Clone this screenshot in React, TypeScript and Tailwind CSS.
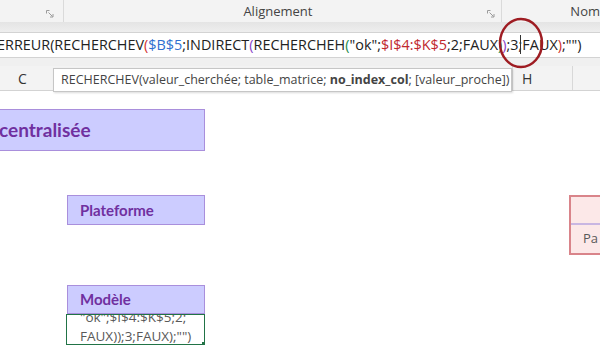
import React from 'react';

function Launcher() {
  return (
    <svg width="8" height="8" viewBox="0 0 8 8" className="shrink-0">
      <path d="M0.5 0.5h3M0.5 0.5v3" stroke="#9a9a9a" strokeWidth="1" fill="none" />
      <path d="M2.5 2.5l4 4M7 4v3h-3" stroke="#9a9a9a" strokeWidth="1" fill="none" />
    </svg>
  );
}

export default function App() {
  return (
    <div
      className="relative w-[600px] h-[363px] overflow-hidden bg-white"
      style={{ fontFamily: '"Open Sans", "Noto Sans", sans-serif' }}
    >
      {/* ─── Ribbon group labels ─── */}
      <div className="flex h-[22px] bg-[#f3f3f3] text-[13px] text-[#444]">
        <div className="w-[65px] flex items-center justify-end pr-[9px] pt-[6px] border-r border-[#dadada]">
          <Launcher />
        </div>
        <div className="w-[442px] flex items-center border-r border-[#dadada] relative">
          <span className="flex-1 text-center pl-[4px] leading-none">Alignement</span>
          <div className="pr-[6px] pt-[6px]">
            <Launcher />
          </div>
        </div>
        <div className="flex items-center pl-[68px] leading-none">Nom</div>
      </div>
      <div className="h-[10px] bg-gradient-to-b from-[#e4e4e4] to-[#eeeeee]" />

      {/* ─── Formula bar ─── */}
      <div className="h-[26px] bg-white border-y border-[#d3d3d3] flex items-center">
        <div className="relative whitespace-nowrap text-[14.4px] text-[#222] ml-[-3px] leading-none">
          <span>ERREUR(RECHERCHEV</span>
          <span className="text-[#d0312d]">(</span>
          <span className="text-[#2f6fcf]">$B$5</span>
          <span>;INDIRECT</span>
          <span className="text-[#8a3fc8]">(</span>
          <span>RECHERCHEH</span>
          <span className="text-[#1e8a4a]">(</span>
          <span>"ok";</span>
          <span className="text-[#c0272d]">$I$4:$K$5</span>
          <span>;2;FAUX</span>
          <span className="text-[#1e8a4a]">)</span>
          <span className="text-[#8a3fc8]">)</span>
          <span>;3</span>
          <span className="relative inline-block w-0 h-[1px]">
            <span className="absolute left-[1px] top-[-14px] w-[1px] h-[19px] bg-[#333]" />
            {/* ─── annotation ellipse around the cursor ─── */}
            <svg
              className="absolute left-[-22px] top-[-32px]"
              width="48"
              height="52"
              viewBox="0 0 48 52"
            >
              <ellipse cx="24" cy="26" rx="21" ry="24" fill="none" stroke="#9e1c22" strokeWidth="2.5" />
            </svg>
          </span>
          <span>;FAUX</span>
          <span className="text-[#d0312d]">)</span>
          <span>;"")</span>
        </div>
      </div>
      <div className="h-[8px] bg-[#f0f0f0]" />

      {/* ─── Column headers ─── */}
      <div className="flex h-[25px] bg-[#f3f3f3] border-b border-[#d3d3d3] text-[14px] text-[#333]">
        <div className="w-[45px] flex items-center justify-center">C</div>
        <div className="w-[468px] border-r border-[#d8d8d8]" />
        <div className="w-[60px] flex items-center pl-[9px] border-r border-[#d8d8d8]">H</div>
      </div>

      {/* ─── Sheet ─── */}
      <div className="flex flex-col" style={{ fontFamily: 'Lato, "Open Sans", sans-serif' }}>
        <div className="mt-[18px] ml-[-1px] w-[206px] h-[42px] bg-[#ccccff] border border-[#a98fdc] flex items-center text-[19px] font-bold text-[#7030a0]">
          <span className="ml-[-1px]">centralisée</span>
        </div>

        <div className="mt-[44px] flex items-start">
          <div className="ml-[67px] w-[138px] h-[30px] bg-[#ccccff] border border-[#a98fdc] flex items-center pl-[12px] text-[15px] font-bold text-[#7030a0]">
            Plateforme
          </div>
          <div className="ml-auto w-[31px] h-[60px] border-l-[2px] border-t-[2px] border-b-[2px] border-[#d9848a] bg-[#fce8e8] flex flex-col">
            <div className="h-[28px] border-b-[2px] border-[#c9b6e2]" />
            <div
              className="flex-1 flex items-center pl-[12px] text-[13px] text-[#595959]"
              style={{ fontFamily: '"Open Sans", sans-serif' }}
            >
              Pa
            </div>
          </div>
        </div>

        <div className="mt-[30px] ml-[67px] w-[138px] h-[29px] bg-[#ccccff] border border-[#a98fdc] flex items-center pl-[12px] text-[15px] font-bold text-[#7030a0]">
          Modèle
        </div>
        <div
          className="ml-[66px] w-[139px] h-[31px] border border-[#217346] overflow-hidden relative text-[13.5px] text-[#595959] leading-[19px]"
          style={{ fontFamily: '"Open Sans", sans-serif' }}
        >
          <div className="mt-[-7px] pl-[13px] whitespace-nowrap">"ok";$I$4:$K$5;2;</div>
          <div className="pl-[13px] whitespace-nowrap">FAUX));3;FAUX);"")</div>
          <div className="absolute right-[-2px] bottom-[-2px] w-[4px] h-[4px] bg-[#217346]" />
        </div>
      </div>

      {/* ─── Function tooltip ─── */}
      <div className="absolute left-[53px] top-[68px] w-[459px] h-[24px] bg-white border border-[#c6c6c6] shadow-[1px_1px_2px_rgba(0,0,0,0.15)] flex items-center pl-[7px] whitespace-nowrap text-[12.5px] text-[#444]">
        <span>RECHERCHEV(valeur_cherchée; table_matrice;&nbsp;</span>
        <span className="font-bold">no_index_col</span>
        <span>; [valeur_proche])</span>
      </div>
    </div>
  );
}
